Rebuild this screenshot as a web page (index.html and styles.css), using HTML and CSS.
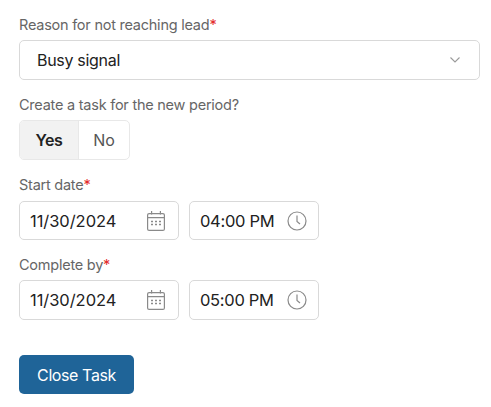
FILE: index.html
```html
<!DOCTYPE html>
<html lang="en">
<head>
  <meta charset="UTF-8">
  <meta name="viewport" content="width=device-width, initial-scale=1">
  <title>Close Task</title>
  <link rel="stylesheet" href="styles.css">
</head>
<body>
  <form class="task-form">
    <div class="field">
      <div class="field-label">Reason for not reaching lead<span class="req">*</span></div>
      <div class="input select-box">
        <span class="select-value">Busy signal</span>
        <svg class="chevron" width="10" height="6" viewBox="0 0 10 6" fill="none" stroke="#9a9a9a" stroke-width="1.1"><path d="M.5.5l4.5 4.5 4.5-4.5"/></svg>
      </div>
    </div>

    <div class="field">
      <div class="field-label">Create a task for the new period?</div>
      <div class="toggle">
        <div class="toggle-opt active">Yes</div>
        <div class="toggle-opt">No</div>
      </div>
    </div>

    <div class="field start-date">
      <div class="field-label">Start date<span class="req">*</span></div>
      <div class="date-row">
        <div class="input date-input">
          <span class="date-value">11/30/2024</span>
          <svg class="icon" width="18" height="20" viewBox="0 0 18 20" fill="none" stroke="#8a8a8a" stroke-width="1.2"><rect x=".6" y="2.6" width="16.8" height="16.8" rx="1.5"/><path d="M.6 6.6h16.8M4.6 0v3.5M13.4 0v3.5"/><path d="M4 10.5h2M8 10.5h2M12 10.5h2M4 13.5h2M8 13.5h2M12 13.5h2" stroke-width="1.6"/></svg>
        </div>
        <div class="input time-input">
          <span class="time-value">04:00 PM</span>
          <svg class="icon" width="20" height="20" viewBox="0 0 20 20" fill="none" stroke="#8a8a8a" stroke-width="1.2"><circle cx="10" cy="10" r="9"/><path d="M10 4.5v6l3 2.5"/></svg>
        </div>
      </div>
    </div>

    <div class="field">
      <div class="field-label">Complete by<span class="req">*</span></div>
      <div class="date-row">
        <div class="input date-input">
          <span class="date-value">11/30/2024</span>
          <svg class="icon" width="18" height="20" viewBox="0 0 18 20" fill="none" stroke="#8a8a8a" stroke-width="1.2"><rect x=".6" y="2.6" width="16.8" height="16.8" rx="1.5"/><path d="M.6 6.6h16.8M4.6 0v3.5M13.4 0v3.5"/><path d="M4 10.5h2M8 10.5h2M12 10.5h2M4 13.5h2M8 13.5h2M12 13.5h2" stroke-width="1.6"/></svg>
        </div>
        <div class="input time-input">
          <span class="time-value">05:00 PM</span>
          <svg class="icon" width="20" height="20" viewBox="0 0 20 20" fill="none" stroke="#8a8a8a" stroke-width="1.2"><circle cx="10" cy="10" r="9"/><path d="M10 4.5v6l3 2.5"/></svg>
        </div>
      </div>
    </div>

    <button type="button" class="btn-close">Close Task</button>
  </form>
</body>
</html>
```
FILE: styles.css
```css
body {
  margin: 0;
  background: #fff;
  font-family: Inter, "Liberation Sans", sans-serif;
  color: #222;
}

.task-form {
  width: 461px;
  padding: 15px 0 0 19px;
}

.field {
  margin-bottom: 15px;
}

.field-label {
  font-size: 14.5px;
  letter-spacing: -0.24px;
  line-height: 20px;
  color: #666;
  margin-bottom: 5px;
}

.req {
  color: #e32b2b;
}

.input {
  display: flex;
  align-items: center;
  justify-content: space-between;
  box-sizing: border-box;
  height: 40px;
  background: #fff;
  border: 1px solid #d9d9d9;
  border-radius: 5px;
  font-size: 16.5px;
}

.select-box {
  width: 461px;
  padding: 0 19px 0 17px;
  font-size: 16px;
  letter-spacing: -0.3px;
}

.date-row {
  display: flex;
  gap: 10px;
}

.start-date .field-label {
  margin-bottom: 6px;
}

.start-date .input {
  height: 39px;
}

.date-input {
  width: 160px;
  padding: 0 13px 0 10px;
}

.date-value {
  letter-spacing: -0.05px;
}

.time-input {
  width: 130px;
  padding: 0 11px 0 10px;
}

.time-value {
  letter-spacing: -0.3px;
}

.toggle {
  display: flex;
  box-sizing: border-box;
  width: 111px;
  height: 40px;
  border: 1px solid #e8e8e8;
  border-radius: 5px;
  overflow: hidden;
  font-size: 16px;
}

.toggle-opt {
  display: flex;
  align-items: center;
  justify-content: center;
  flex: 1;
  color: #555;
}

.toggle-opt.active {
  flex: 0 0 58px;
  background: #f2f2f2;
  border-right: 1px solid #e8e8e8;
  color: #222;
  font-weight: 600;
  letter-spacing: -0.3px;
}

.btn-close {
  display: block;
  width: 115px;
  height: 39px;
  margin-top: 35px;
  background: #1f6498;
  border: none;
  border-radius: 5px;
  color: #fff;
  font-family: inherit;
  font-size: 16px;
  letter-spacing: -0.4px;
}
```
